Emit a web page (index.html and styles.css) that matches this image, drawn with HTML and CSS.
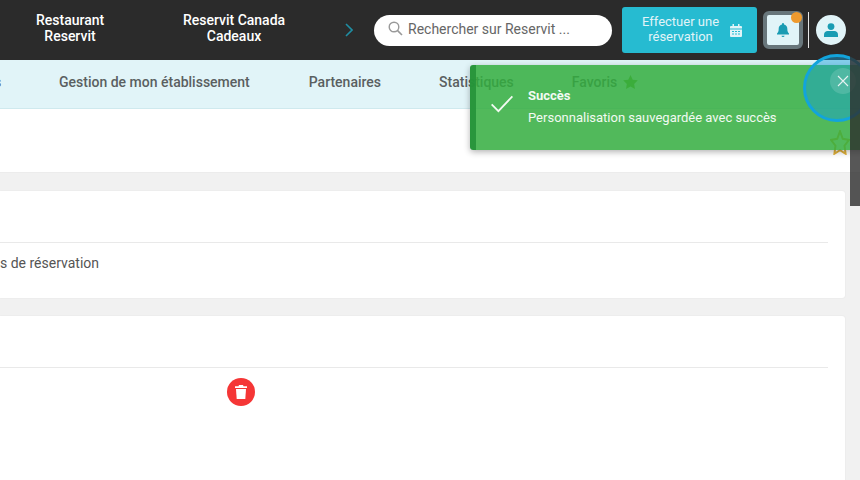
FILE: index.html
```html
<!DOCTYPE html>
<html lang="fr">
<head>
    <meta charset="UTF-8">
    <meta name="viewport" content="width=device-width, initial-scale=1.0">
    <title>Reservit</title>
    <link rel="stylesheet" href="styles.css">
</head>
<body>
    <header class="topbar">
        <nav class="top-links">
            <a class="top-link top-link-first">Restaurant<br>Reservit</a>
            <a class="top-link top-link-second">Reservit Canada<br>Cadeaux</a>
        </nav>
        <svg class="chevron" width="8" height="14" viewBox="0 0 8 14"><path d="M1 1l6 6-6 6" fill="none" stroke="#1f8ea3" stroke-width="1.6"/></svg>
        <div class="search">
            <svg width="15" height="15" viewBox="0 0 15 15"><circle cx="6" cy="6" r="4.8" fill="none" stroke="#999" stroke-width="1.4"/><path d="M9.600 9.600l4.400 4.400" stroke="#999" stroke-width="1.6"/></svg>
            <span>Rechercher sur Reservit ...</span>
        </div>
        <a class="book-btn">
            <span class="book-label">Effectuer une<br>réservation</span>
            <svg width="12" height="13" viewBox="0 0 12 13"><path d="M0 3a1 1 0 0 1 1-1h1.500V0h1.500v2h4V0h1.500v2H11a1 1 0 0 1 1 1v1.500H0zM0 5.500h12V12a1 1 0 0 1-1 1H1a1 1 0 0 1-1-1z" fill="#e1f4f8"/><path d="M2 7.500h2M5 7.500h2M8 7.500h2M2 10h2M5 10h2M8 10h2" stroke="#26bbd1" stroke-width="1.200"/></svg>
        </a>
        <div class="bell-btn">
            <svg width="12" height="14" viewBox="0 0 12 14"><path d="M6 0a1 1 0 0 1 1 1v.6c2 .4 3.300 2 3.300 4 0 3 .7 4 1.700 5v1H0v-1c1-1 1.700-2 1.700-5 0-2 1.300-3.600 3.300-4V1a1 1 0 0 1 1-1z" fill="#1a9cb3"/><path d="M4.500 12.800h3a1.500 1.200 0 0 1-3 0z" fill="#1a9cb3"/></svg>
            <span class="bell-dot"></span>
        </div>
        <span class="top-sep"></span>
        <div class="user-btn">
            <svg width="14" height="14" viewBox="0 0 14 14"><circle cx="7" cy="3.600" r="3.400" fill="#1a9cb3"/><path d="M0 14v-2.500C0 9.500 1.800 8 3.500 8h7c1.700 0 3.500 1.500 3.500 3.500V14z" fill="#1a9cb3"/></svg>
        </div>
    </header>

    <nav class="subnav">
        <a class="sub-cut">s</a>
        <a class="sub-gestion">Gestion de mon établissement</a>
        <a class="sub-part">Partenaires</a>
        <a class="sub-stats">Statistiques</a>
        <a class="sub-fav">Favoris
            <svg width="15" height="14" viewBox="0 0 24 23"><path d="M12 0l3.700 7.600 8.300 1.200-6 5.900 1.400 8.300L12 19l-7.400 4L6 14.700 0 8.800l8.300-1.200z" fill="#6fae2c"/></svg>
        </a>
    </nav>

    <main class="content">
        <section class="band">
            <svg class="band-star" width="20" height="25" viewBox="0 0 24 30"><path d="M12 1.500l3.300 9 7.500 1.400-5.400 6.900 1.300 9.700L12 24.300l-6.700 4.200 1.300-9.700-5.400-6.900 7.500-1.400z" fill="none" stroke="#e2b23a" stroke-width="2.400"/></svg>
        </section>
        <section class="card">
            <div class="card-head"></div>
            <div class="card-body card-text">s de réservation</div>
        </section>
        <section class="card card-last">
            <div class="card-head"></div>
            <div class="card-body">
                <button class="trash">
                    <svg width="14" height="16" viewBox="0 0 14 16"><path d="M1 2.200h3.500L5 1h4l.5 1.200H13v1.800H1z" fill="#fff"/><path d="M2 5h10l-.7 10H2.700z" fill="#fff"/></svg>
                </button>
            </div>
        </section>
    </main>

    <div class="toast">
        <svg class="toast-check" width="24" height="18" viewBox="0 0 26 20"><path d="M1.500 10.500l7.500 7.500L24.500 1.500" fill="none" stroke="#f2faf2" stroke-width="2"/></svg>
        <div class="toast-text">
            <strong>Succès</strong>
            <p>Personnalisation sauvegardée avec succès</p>
        </div>
    </div>

    <div class="focus-ring">
        <span class="close-btn">
            <svg width="12" height="12" viewBox="0 0 12 12"><path d="M1 1l10 10M11 1L1 11" stroke="#e6f2f2" stroke-width="1.100"/></svg>
        </span>
    </div>

    <div class="scrollbar"><span class="scroll-thumb"></span></div>
</body>
</html>
```

FILE: styles.css
```css
* {
    box-sizing: border-box;
}
html, body {
    margin: 0;
    height: 100%;
    overflow: hidden;
}
body {
    font-family: Roboto, "Liberation Sans", sans-serif;
    background-color: #f1f1f1;
    color: #555;
    width: 860px;
    height: 480px;
    position: relative;
}

/* barre du haut */
.topbar {
    height: 60px;
    background-color: #2b2b2b;
    display: flex;
    align-items: center;
}
.top-links {
    display: flex;
    margin-bottom: 4px;
}
.top-link {
    color: #fff;
    font-size: 14px;
    font-weight: 500;
    line-height: 16px;
    text-align: center;
}
.top-link-first {
    margin-left: 36px;
    width: 68px;
}
.top-link-second {
    margin-left: 78px;
    width: 104px;
}
.chevron {
    margin-left: 59px;
}
.search {
    margin-left: 21px;
    width: 238px;
    height: 31px;
    background-color: #fff;
    border-radius: 16px;
    display: flex;
    align-items: center;
    gap: 5px;
    padding: 0 0 3px 14px;
    font-size: 14px;
    color: #666;
}
.book-btn {
    margin-left: 10px;
    width: 135px;
    height: 46px;
    background-color: #26bbd1;
    border-radius: 3px;
    color: #e1f4f8;
    font-size: 13px;
    line-height: 15px;
    text-align: center;
    display: flex;
    align-items: center;
    padding-left: 20px;
    gap: 11px;
}
.book-label {
    margin-bottom: 2px;
}
.bell-btn {
    margin-left: 6px;
    width: 40px;
    height: 38px;
    background-color: #e1f4f8;
    border: 4px solid #68767b;
    border-radius: 6px;
    display: flex;
    align-items: center;
    justify-content: center;
    position: relative;
}
.bell-dot {
    position: absolute;
    top: -3px;
    right: -3px;
    width: 11px;
    height: 11px;
    border-radius: 50%;
    background-color: #ee9a2e;
}
.top-sep {
    margin-left: 5px;
    width: 1px;
    height: 36px;
    background-color: #e8e8e8;
}
.user-btn {
    margin-left: 7px;
    width: 30px;
    height: 30px;
    border-radius: 50%;
    background-color: #e1f4f8;
    display: flex;
    align-items: center;
    justify-content: center;
}

/* sous-menu */
.subnav {
    height: 49px;
    background-color: #e1f4f8;
    border-bottom: 1px solid #cfe9ee;
    display: flex;
    align-items: center;
    padding-bottom: 4px;
    font-size: 14px;
    font-weight: 500;
    color: #5a5f61;
    white-space: nowrap;
}
.sub-cut {
    margin-left: -6px;
    width: 8px;
}
.sub-gestion {
    margin-left: 57px;
}
.sub-part {
    margin-left: 59px;
}
.sub-stats {
    margin-left: 58px;
}
.sub-fav {
    margin-left: 58px;
    display: flex;
    align-items: center;
    gap: 6px;
}

/* contenu */
.content {
    background-color: #f1f1f1;
    height: 371px;
    overflow: hidden;
}
.band {
    height: 64px;
    background-color: #fff;
    border-bottom: 1px solid #ececec;
    display: flex;
    justify-content: flex-end;
    padding: 21px 10px 0 0;
}
.card {
    background-color: #fff;
    width: 845px;
    margin-top: 18px;
    height: 107px;
    box-shadow: 0 0 2px rgba(0, 0, 0, 0.07);
    border-radius: 0 3px 3px 0;
}
.card-last {
    height: 200px;
}
.card-head {
    height: 52px;
    width: 828px;
    border-bottom: 1px solid #e9e9e9;
}
.card-body {
    height: 55px;
    position: relative;
}
.card-text {
    font-size: 14px;
    padding-top: 12px;
    color: #555;
}
.trash {
    position: absolute;
    left: 227px;
    top: 10px;
    width: 28px;
    height: 28px;
    border: none;
    border-radius: 50%;
    background-color: #f53636;
    padding: 0;
    display: flex;
    align-items: center;
    justify-content: center;
}

/* notification */
.toast {
    position: absolute;
    left: 470px;
    top: 65px;
    width: 400px;
    height: 85px;
    background-color: rgba(50, 173, 62, 0.85);
    border-left: 6px solid rgba(35, 145, 55, 0.85);
    border-radius: 3px;
    box-shadow: 0 2px 6px rgba(0, 0, 0, 0.3);
    display: flex;
    padding: 22px 0 0 14px;
    gap: 14px;
    color: #f2faf2;
    font-size: 13px;
}
.toast-check {
    margin-top: 8px;
}
.toast-text strong {
    display: block;
    font-weight: 700;
    line-height: 18px;
}
.toast-text p {
    margin: 5px 0 0;
    line-height: 16px;
}
.focus-ring {
    position: absolute;
    left: 803px;
    top: 54px;
    width: 68px;
    height: 68px;
    border: 3px solid #12a4dc;
    border-radius: 50%;
    background-color: rgba(20, 160, 220, 0.45);
}
.close-btn {
    position: absolute;
    left: 24px;
    top: 11px;
    width: 26px;
    height: 26px;
    border-radius: 50%;
    background-color: rgba(255, 255, 255, 0.14);
    display: flex;
    align-items: center;
    justify-content: center;
}

/* barre de defilement */
.scrollbar {
    position: absolute;
    top: 0;
    right: 0;
    width: 10px;
    height: 480px;
}
.scroll-thumb {
    display: block;
    height: 206px;
    background-color: rgba(45, 45, 45, 0.8);
}
```
